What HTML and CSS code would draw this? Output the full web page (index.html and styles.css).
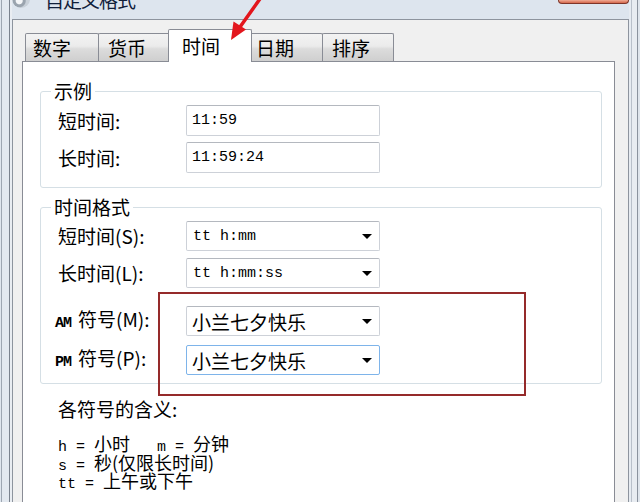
FILE: index.html
```html
<!DOCTYPE html>
<html lang="zh-CN">
<head>
    <meta charset="UTF-8">
    <meta name="viewport" content="width=device-width, initial-scale=1.0">
    <title>自定义格式</title>
    <link rel="stylesheet" href="styles.css">
</head>
<body>
    <div class="window">
        <div class="titlebar">
            <span class="app-icon"></span>
            <span class="title">自定义格式</span>
            <span class="close-btn"></span>
        </div>

        <div class="client">
            <div class="tabs">
                <div class="tab tab-num">数字</div>
                <div class="tab tab-cur">货币</div>
                <div class="tab active">时间</div>
                <div class="tab tab-date">日期</div>
                <div class="tab tab-sort">排序</div>
            </div>

            <div class="panel">
                <fieldset class="group group-sample">
                    <legend>示例</legend>
                    <div class="row">
                        <label>短时间:</label>
                        <div class="textbox">11:59</div>
                    </div>
                    <div class="row">
                        <label>长时间:</label>
                        <div class="textbox">11:59:24</div>
                    </div>
                </fieldset>

                <fieldset class="group group-format">
                    <legend>时间格式</legend>
                    <div class="row">
                        <label>短时间(S):</label>
                        <div class="combo"><span class="mono">tt h:mm</span></div>
                    </div>
                    <div class="row">
                        <label>长时间(L):</label>
                        <div class="combo"><span class="mono">tt h:mm:ss</span></div>
                    </div>
                    <div class="row row-am">
                        <label class="label-ampm"><span class="tiny">AM</span>符号(M):</label>
                        <div class="combo"><span>小兰七夕快乐</span></div>
                    </div>
                    <div class="row row-pm">
                        <label class="label-ampm"><span class="tiny">PM</span>符号(P):</label>
                        <div class="combo focused"><span>小兰七夕快乐</span></div>
                    </div>
                </fieldset>

                <div class="notes">
                    <div class="notes-title">各符号的含义:</div>
                    <div class="notes-lines">
                        <div class="line">h = <span class="cjk">小时</span>   m = <span class="cjk">分钟</span></div>
                        <div class="line">s = <span class="cjk">秒(仅限长时间)</span></div>
                        <div class="line">tt = <span class="cjk">上午或下午</span></div>
                    </div>
                </div>
            </div>
        </div>

        <!-- annotation marks on top of the screenshot -->
        <div class="highlight"></div>
        <svg class="arrow" width="640" height="502" viewBox="0 0 640 502">
            <line x1="262" y1="-4" x2="240" y2="27" stroke="#e3161d" stroke-width="3.5" stroke-linecap="round"/>
            <polygon points="231,40 233.5,21.5 246,29.5" fill="#e3161d"/>
        </svg>
    </div>
</body>
</html>
```

FILE: styles.css
```css
body {
    margin: 0;
    font-family: "Noto Sans CJK SC", "Noto Sans", sans-serif;
    color: #000;
}
.window {
    position: relative;
    width: 640px;
    height: 502px;
    overflow: hidden;
    box-sizing: border-box;
    padding: 0 11px 0 12px;
    background:
        linear-gradient(to right, #dfe6ee 0 1px, #9ea7b2 1px 2px, #e3e9f0 2px 9px, #7b838e 9px 10px, #e9edf2 10px 12px) left top / 12px 100% no-repeat,
        linear-gradient(to right, #e6ebf1 0 2px, #b9c0ca 2px 3px, #e8ecf1 3px 8px, #8b939e 8px 9px, #dfe5ec 9px 11px) right top / 11px 100% no-repeat,
        #dde5ee;
}

/* title bar */
.titlebar {
    display: flex;
    height: 19px;
    overflow: hidden;
}
.app-icon {
    width: 18px;
    height: 18px;
    margin: -10px 0 0 0;
    border-radius: 50%;
    background: radial-gradient(circle at 40% 60%, #f4f6f8 0 3px, #9aa4ae 4px 6px, #c8d0d8 7px);
}
.title {
    margin: -11px 0 0 15px;
    font-size: 19px;
    line-height: 22px;
    letter-spacing: -1px;
    color: #10203a;
}
.close-btn {
    margin-left: auto;
    width: 71px;
    height: 4px;
    box-sizing: border-box;
    border: 1px solid #7e3528;
    border-top: none;
    border-radius: 0 0 5px 5px;
    background: linear-gradient(#f0ab94, #d4674c);
}

/* dialog client area */
.client {
    height: 100%;
    box-sizing: border-box;
    border: 1px solid #8d949e;
    border-bottom: none;
    background: #f0f0f0;
    padding: 9px 13px 0 9px;
}

/* tabs */
.tabs {
    position: relative;
    z-index: 1;
    display: flex;
    align-items: flex-end;
    height: 33px;
    margin-bottom: -1px;
    padding-left: 3px;
}
.tab {
    flex-shrink: 0;
    height: 28px;
    margin-bottom: 1px;
    box-sizing: border-box;
    border: 1px solid #898c95;
    border-bottom: none;
    border-radius: 2px 2px 0 0;
    background: linear-gradient(#f3f3f3, #ebebeb 45%, #dcdcdc 55%, #cfcfcf);
    font-size: 19px;
    line-height: 27px;
    padding-left: 7px;
}
.tab-num { width: 74px; }
.tab-cur { width: 73px; margin-left: -1px; padding-left: 9px; }
.tab-date { width: 73px; padding-left: 5px; }
.tab-sort { width: 72px; margin-left: -1px; padding-left: 9px; }
.tab.active {
    z-index: 2;
    width: 84px;
    height: 33px;
    margin: 0 -2px 0 -3px;
    background: #fff;
    line-height: 31px;
    padding-left: 13px;
}

/* tab page */
.panel {
    height: 100%;
    box-sizing: border-box;
    border: 1px solid #898c95;
    border-bottom: none;
    background: #fff;
    padding: 18px 12px 0 17px;
}
.group {
    margin: 0;
    min-width: 0;
    border: 1px solid #d5dfe5;
    border-radius: 3px;
    padding: 3px 0 14px 0;
}
.group legend {
    margin-left: 10px;
    padding: 0 3px;
    font-size: 19px;
    line-height: 22px;
}
.group-format {
    margin-top: 8px;
    padding-bottom: 8px;
}
.row {
    display: flex;
    align-items: center;
    height: 31px;
}
.row + .row {
    margin-top: 6px;
}
.group-format .row {
    height: 30px;
}
.group-format .row + .row {
    margin-top: 7px;
}
.group-format .row.row-am {
    margin-top: 18px;
}
.group-format .row.row-pm {
    margin-top: 9px;
}
.row label {
    width: 145px;
    box-sizing: border-box;
    padding-left: 17px;
    font-size: 19px;
    line-height: 22px;
}
.row .label-ampm {
    padding-left: 14px;
}
.tiny {
    display: inline-block;
    margin-right: 7px;
    font-family: "Liberation Mono", monospace;
    font-size: 15px;
    font-weight: bold;
    letter-spacing: -1px;
}
.textbox, .combo {
    width: 194px;
    height: 100%;
    box-sizing: border-box;
    border: 1px solid #cdd1d8;
    border-top-color: #b4b8bf;
    border-radius: 2px;
    background: #fff;
    padding-left: 5px;
}
.textbox {
    font-family: "Liberation Mono", monospace;
    font-size: 15px;
    line-height: 29px;
}
.combo {
    display: flex;
    align-items: center;
    justify-content: space-between;
    padding-right: 7px;
    font-size: 19px;
}
.combo::after {
    content: "";
    border-left: 5.5px solid transparent;
    border-right: 5.5px solid transparent;
    border-top: 5px solid #000;
}
.combo.focused {
    border-color: #7eb4ea;
}
.mono {
    font-family: "Liberation Mono", monospace;
    font-size: 15px;
    margin-left: 1px;
}

/* legend text */
.notes {
    margin: 14px 0 0 18px;
}
.notes-title {
    font-size: 19px;
    line-height: 22px;
}
.notes-lines {
    margin-top: 14px;
    font-family: "Liberation Mono", monospace;
    font-size: 15px;
}
.line {
    height: 18.5px;
    line-height: 18px;
    white-space: pre;
}
.cjk {
    font-family: "Noto Sans CJK SC", sans-serif;
    font-size: 18px;
    line-height: 18px;
}

/* red annotation */
.highlight {
    position: absolute;
    z-index: 5;
    left: 158px;
    top: 292px;
    width: 368px;
    height: 104px;
    box-sizing: border-box;
    border: 2px solid #952a2a;
}
.arrow {
    position: absolute;
    z-index: 5;
    left: 0;
    top: 0;
    pointer-events: none;
}
```
